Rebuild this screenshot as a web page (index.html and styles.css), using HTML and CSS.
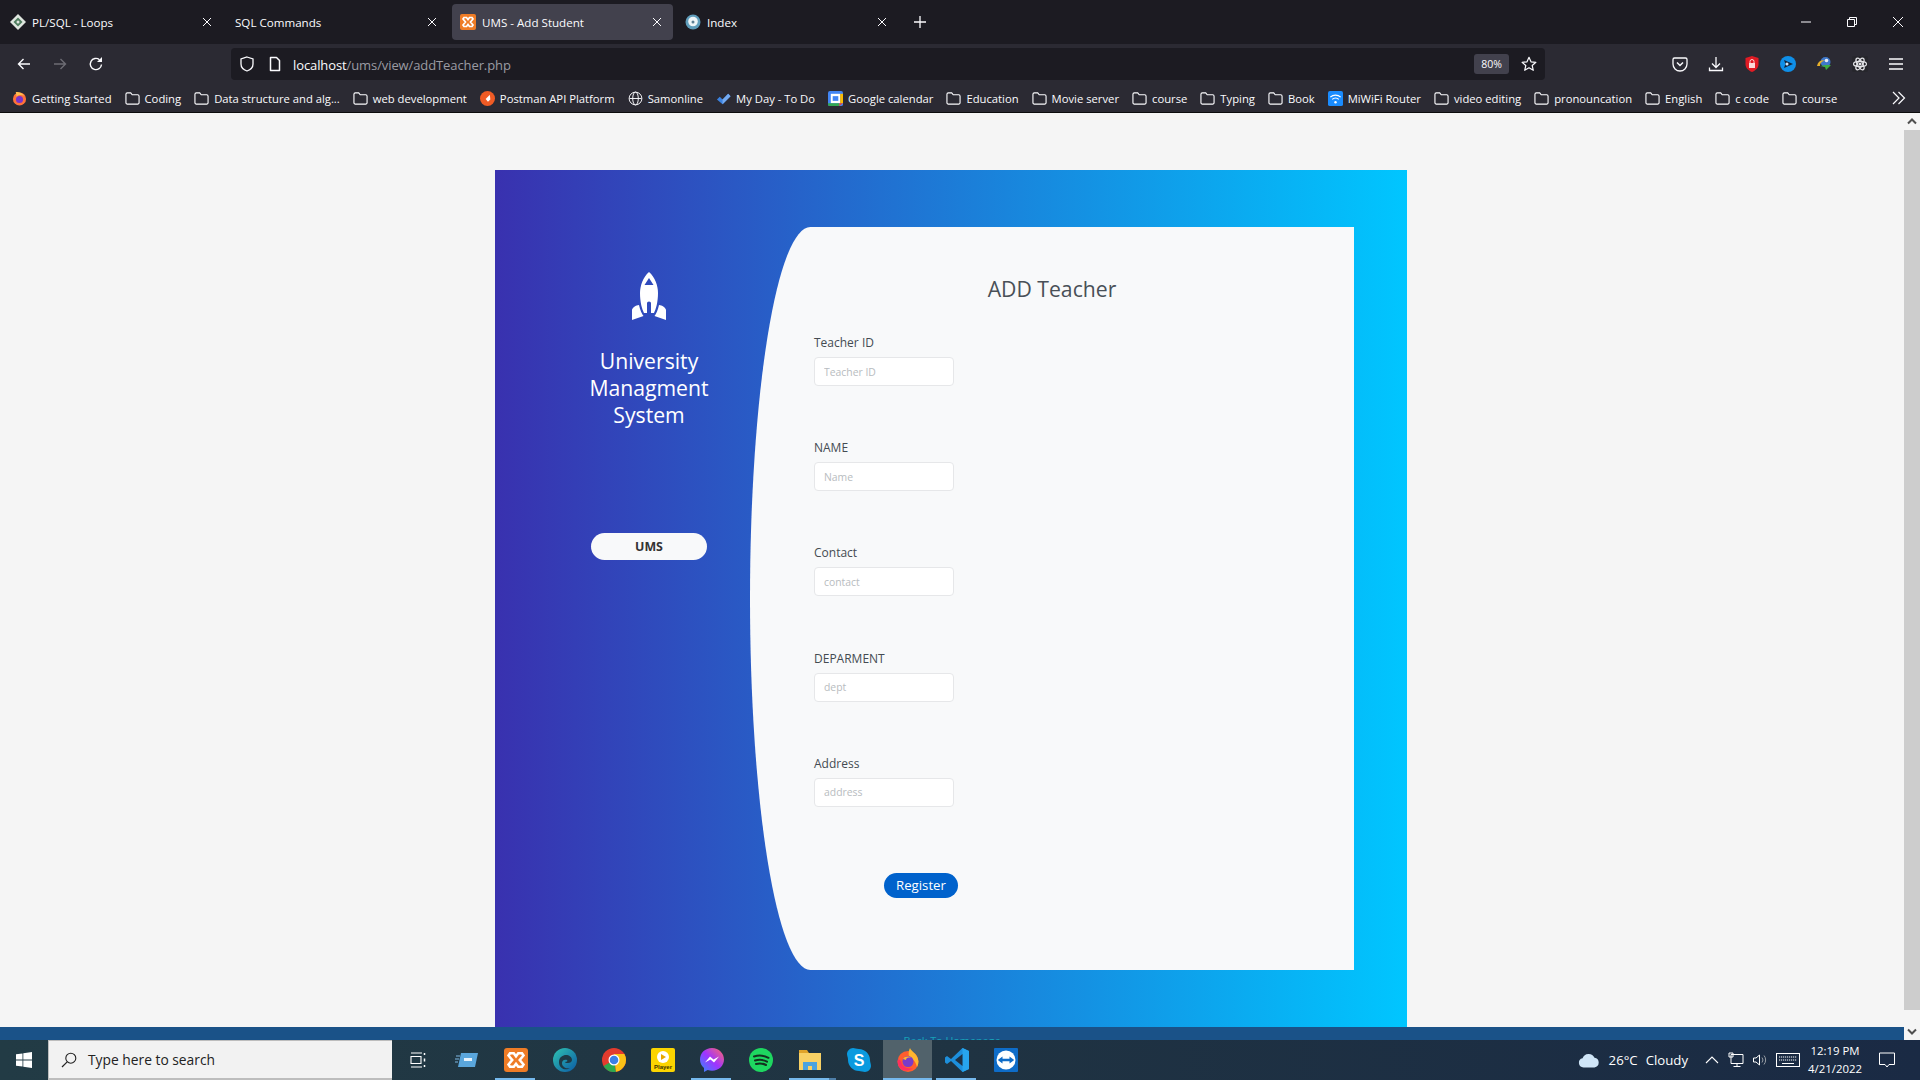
FILE: index.html
```html
<!DOCTYPE html>
<html lang="en">
<head>
    <meta charset="UTF-8">
    <title>UMS - Add Student</title>
    <link rel="stylesheet" href="styles.css">
</head>
<body>
    <svg class="defs" width="0" height="0">
        <symbol id="folder" viewBox="0 0 16 16">
            <path d="M2.5 2h3.6l1.6 2h5.8a1.5 1.5 0 0 1 1.5 1.5v7a1.5 1.5 0 0 1-1.5 1.5h-11A1.5 1.5 0 0 1 1 12.500v-9A1.500 1.500 0 0 1 2.500 2z" fill="none" stroke="#fbfbfe" stroke-width="1.200"/>
        </symbol>
        <symbol id="xampp" viewBox="0 0 16 16">
            <rect width="16" height="16" rx="2" fill="#ef7c26"/>
            <path d="M4 3.500h2.500L8 5.500l1.500-2H12l1 1.500-2.500 3 2.500 3-1 1.500H9.500L8 10.500l-1.500 2H4l-1-1.500 2.500-3-2.500-3z" fill="none" stroke="#fff" stroke-width="1.700"/>
        </symbol>
        <symbol id="close" viewBox="0 0 10 10">
            <path d="M1 1l8 8M9 1l-8 8" stroke="#fbfbfe" stroke-width="1" fill="none"/>
        </symbol>
    </svg>

    <div class="tabbar">
        <div class="tab">
            <svg class="favicon" viewBox="0 0 16 16"><path d="M8 0l8 8-8 8-8-8z" fill="#dfe6df"/><path d="M8 3.500L12.500 8 8 12.500 3.500 8z" fill="#4f7d5f"/><circle cx="8" cy="8" r="1.500" fill="#dfe6df"/></svg>
            <span class="tab-title">PL/SQL - Loops</span>
            <svg class="tab-close"><use href="#close"/></svg>
        </div>
        <div class="tab">
            <span class="tab-title">SQL Commands</span>
            <svg class="tab-close"><use href="#close"/></svg>
        </div>
        <div class="tab tab-active">
            <svg class="favicon"><use href="#xampp"/></svg>
            <span class="tab-title">UMS - Add Student</span>
            <svg class="tab-close"><use href="#close"/></svg>
        </div>
        <div class="tab">
            <svg class="favicon" viewBox="0 0 16 16"><circle cx="8" cy="8" r="7.500" fill="#5f9dbb"/><circle cx="8" cy="7.500" r="4.800" fill="#eef5f8"/><circle cx="8" cy="8" r="1.500" fill="#5b7f94"/></svg>
            <span class="tab-title">Index</span>
            <svg class="tab-close"><use href="#close"/></svg>
        </div>
        <svg class="new-tab" viewBox="0 0 14 14"><path d="M7 1v12M1 7h12" stroke="#fbfbfe" stroke-width="1.300"/></svg>
        <div class="window-controls">
            <svg viewBox="0 0 12 12"><path d="M1 6h10" stroke="#fbfbfe"/></svg>
            <svg viewBox="0 0 12 12"><path d="M1.500 3.500h7v7h-7zM3.500 3.500v-2h7v7h-2" fill="none" stroke="#fbfbfe"/></svg>
            <svg viewBox="0 0 12 12"><path d="M1 1l10 10M11 1L1 11" stroke="#fbfbfe" fill="none"/></svg>
        </div>
    </div>

    <div class="navbar">
        <svg class="nav-btn" viewBox="0 0 16 16"><path d="M14 8H2.500M7.500 3l-5 5 5 5" fill="none" stroke="#fbfbfe" stroke-width="1.400"/></svg>
        <svg class="nav-btn" viewBox="0 0 16 16"><path d="M2 8h11.500M8.500 3l5 5-5 5" fill="none" stroke="#6d6c74" stroke-width="1.400"/></svg>
        <svg class="nav-btn" viewBox="0 0 16 16"><path d="M13.500 8.500A5.600 5.600 0 1 1 11.500 3.700" fill="none" stroke="#fbfbfe" stroke-width="1.400"/><path d="M14 1v5H9z" fill="#fbfbfe"/></svg>
        <div class="urlbar">
            <svg class="url-icon" viewBox="0 0 16 16"><path d="M8 1l6 2v5c0 3.500-3 6-6 7-3-1-6-3.500-6-7V3z" fill="none" stroke="#fbfbfe" stroke-width="1.300"/></svg>
            <svg class="url-icon page-icon" viewBox="0 0 16 16"><path d="M3.500 1.500h6l3 3v10h-9z" fill="none" stroke="#fbfbfe" stroke-width="1.500" stroke-linejoin="round"/></svg>
            <span class="url-text"><b>localhost</b>/ums/view/addTeacher.php</span>
            <span class="zoom-level">80%</span>
            <svg class="star" viewBox="0 0 16 16"><path d="M8 1.300l2 4.500 4.900.5-3.700 3.200 1.100 4.800L8 11.800l-4.300 2.500 1.100-4.800L1.100 6.300 6 5.800z" fill="none" stroke="#fbfbfe" stroke-width="1.200" stroke-linejoin="round"/></svg>
        </div>
        <div class="toolbar">
            <svg viewBox="0 0 16 16"><path d="M2.500 2h11A1.500 1.500 0 0 1 15 3.500V8A7 7 0 0 1 1 8V3.500A1.500 1.500 0 0 1 2.500 2z" fill="none" stroke="#fbfbfe" stroke-width="1.300"/><path d="M5 6.500l3 3 3-3" fill="none" stroke="#fbfbfe" stroke-width="1.500"/></svg>
            <svg viewBox="0 0 16 16"><path d="M8 1v10M4 7.500L8 11.500l4-4M1.500 11.500v3h13v-3" fill="none" stroke="#fbfbfe" stroke-width="1.300"/></svg>
            <svg viewBox="0 0 16 16"><path d="M8 0l6.500 2v6c0 4-3 6.500-6.500 8-3.500-1.500-6.500-4-6.500-8V2z" fill="#e01b24"/><rect x="5" y="7" width="6" height="5" fill="#fbd9d9"/><path d="M6 7V5.500a2 2 0 0 1 4 0V7" fill="none" stroke="#fbd9d9"/></svg>
            <svg viewBox="0 0 16 16"><circle cx="8" cy="8" r="8" fill="#0f8fe8"/><path d="M4 4l9 4-9 4 1.500-4z" fill="#14233a"/><circle cx="7" cy="8" r="1.500" fill="#cfe8fb"/></svg>
            <svg viewBox="0 0 16 16"><circle cx="9.500" cy="6" r="5" fill="#3f78c9"/><path d="M1 10c1-5 5-7 8-5-3 0-5 2-5 5z" fill="#e8b02a"/><path d="M15 9l-5 5-1-3-5-1 6-1z" fill="#3fae3f"/><circle cx="10.500" cy="4.500" r="1.800" fill="#e9edf5"/></svg>
            <svg viewBox="0 0 16 16"><rect width="16" height="16" rx="2" fill="#26262c"/><g fill="none" stroke="#e4e4e8" stroke-width="1.200"><ellipse cx="8" cy="8" rx="6.500" ry="2.600"/><ellipse cx="8" cy="8" rx="6.500" ry="2.600" transform="rotate(60 8 8)"/><ellipse cx="8" cy="8" rx="6.500" ry="2.600" transform="rotate(120 8 8)"/></g><circle cx="8" cy="8" r="1.500" fill="#e4e4e8"/></svg>
            <svg viewBox="0 0 16 16"><path d="M1 3h14M1 8h14M1 13h14" stroke="#fbfbfe" stroke-width="1.500"/></svg>
        </div>
    </div>

    <div class="bookmarks">
        <span class="bm">
            <svg viewBox="0 0 16 16"><circle cx="8" cy="8.500" r="7" fill="#ff7139"/><circle cx="8" cy="9" r="3.800" fill="#7a33c9"/><path d="M4 1c3 0 6 0 9 4-3-1-6-1-8 1z" fill="#ffbd4f"/></svg>
            Getting Started
        </span>
        <span class="bm"><svg><use href="#folder"/></svg>Coding</span>
        <span class="bm"><svg><use href="#folder"/></svg>Data structure and alg...</span>
        <span class="bm"><svg><use href="#folder"/></svg>web development</span>
        <span class="bm">
            <svg viewBox="0 0 16 16"><circle cx="8" cy="8" r="8" fill="#ef5b25"/><path d="M10.500 4L6 8.500l2.500 3L11 9z" fill="#fff"/></svg>
            Postman API Platform
        </span>
        <span class="bm">
            <svg viewBox="0 0 16 16" fill="none" stroke="#fbfbfe"><circle cx="8" cy="8" r="6.800"/><ellipse cx="8" cy="8" rx="3" ry="6.800"/><path d="M1.500 8h13"/></svg>
            Samonline
        </span>
        <span class="bm">
            <svg viewBox="0 0 16 16"><path d="M1 9l3-3 3 3 6-6 2.500 2.500L7 14z" fill="#3b82e0"/><path d="M7 9l6-6 2.500 2.500L7 14z" fill="#74aaf0"/></svg>
            My Day - To Do
        </span>
        <span class="bm">
            <svg viewBox="0 0 16 16"><rect width="16" height="16" rx="2" fill="#4285f4"/><rect x="3" y="3" width="10" height="10" fill="#fff"/><path d="M0 13h12v3H2a2 2 0 0 1-2-2z" fill="#34a853"/><path d="M13 3h3v10h-3z" fill="#fbbc04"/><path d="M12 13h4l-4 3z" fill="#ea4335"/><rect x="5" y="5.500" width="6" height="5" fill="#4285f4"/></svg>
            Google calendar
        </span>
        <span class="bm"><svg><use href="#folder"/></svg>Education</span>
        <span class="bm"><svg><use href="#folder"/></svg>Movie server</span>
        <span class="bm"><svg><use href="#folder"/></svg>course</span>
        <span class="bm"><svg><use href="#folder"/></svg>Typing</span>
        <span class="bm"><svg><use href="#folder"/></svg>Book</span>
        <span class="bm">
            <svg viewBox="0 0 16 16"><rect width="16" height="16" rx="2" fill="#1a8cff"/><path d="M2.500 6.500a8 8 0 0 1 11 0M4.500 9a5 5 0 0 1 7 0" fill="none" stroke="#fff" stroke-width="1.300"/><circle cx="8" cy="12" r="1.300" fill="#fff"/></svg>
            MiWiFi Router
        </span>
        <span class="bm"><svg><use href="#folder"/></svg>video editing</span>
        <span class="bm"><svg><use href="#folder"/></svg>pronouncation</span>
        <span class="bm"><svg><use href="#folder"/></svg>English</span>
        <span class="bm"><svg><use href="#folder"/></svg>c code</span>
        <span class="bm"><svg><use href="#folder"/></svg>course</span>
        <svg class="bm-more" viewBox="0 0 14 14"><path d="M1 1l6 6-6 6M6.500 1l6 6-6 6" fill="none" stroke="#fbfbfe" stroke-width="1.200"/></svg>
    </div>

    <div class="viewport">
        <div class="page">
            <div class="register">
                <div class="register-left">
                    <svg class="rocket" viewBox="0 0 34 48">
                        <path fill-rule="evenodd" fill="#fff" d="M17 0C11 5 8 14 8 21c0 9 2 16 4 20h3V31q0-1.500 2-1.500t2 1.500v10h3c2-4 4-11 4-20 0-7-3-16-9-21zM17 6l-4.500 7h9z"/>
                        <path fill="#fff" d="M0 48V38c0-2 4-5 7-5 1 5 3 9 4.500 11zM34 48V38c0-2-4-5-7-5-1 5-3 9-4.500 11z"/>
                    </svg>
                    <h3 class="brand">University Managment System</h3>
                    <div class="ums-badge">UMS</div>
                </div>
                <div class="register-right">
                    <h3 class="form-title">ADD Teacher</h3>
                    <div class="form-group">
                        <label>Teacher ID</label>
                        <input type="text" placeholder="Teacher ID">
                    </div>
                    <div class="form-group">
                        <label>NAME</label>
                        <input type="text" placeholder="Name">
                    </div>
                    <div class="form-group">
                        <label>Contact</label>
                        <input type="text" placeholder="contact">
                    </div>
                    <div class="form-group">
                        <label>DEPARMENT</label>
                        <input type="text" placeholder="dept">
                    </div>
                    <div class="form-group">
                        <label>Address</label>
                        <input type="text" placeholder="address">
                    </div>
                    <button class="btn-register">Register</button>
                </div>
            </div>
            <div class="page-footer">Back To Homepage</div>
        </div>
        <div class="scrollbar">
            <svg viewBox="0 0 16 16"><path d="M4 10l4-4 4 4" fill="none" stroke="#505050" stroke-width="2"/></svg>
            <div class="scroll-track"><div class="scroll-thumb"></div></div>
            <svg viewBox="0 0 16 16"><path d="M4 6l4 4 4-4" fill="none" stroke="#505050" stroke-width="2"/></svg>
        </div>
    </div>

    <div class="taskbar">
        <div class="start">
            <svg viewBox="0 0 16 16"><path d="M0 2.300l6.500-.9v6.200H0zM7.300 1.300L16 0v7.600H7.300zM0 8.400h6.500v6.200L0 13.700zM7.300 8.400H16V16l-8.700-1.300z" fill="#fff"/></svg>
        </div>
        <div class="search">
            <svg viewBox="0 0 16 16"><circle cx="9.800" cy="6.200" r="5" fill="none" stroke="#222" stroke-width="1.100"/><path d="M6.200 9.800L1 15" stroke="#222" stroke-width="1.200"/></svg>
            Type here to search
        </div>
        <div class="task-icons">
            <div class="task-item">
                <svg class="small" viewBox="0 0 16 16"><path d="M1 1h11M1 15h11M1 4.500h10v7H1z" fill="none" stroke="#fff" stroke-width="1.100"/><path d="M14.500 1v2M14.500 6.500v3M14.500 13v2" stroke="#fff" stroke-width="1.500"/></svg>
            </div>
            <div class="task-item">
                <svg viewBox="0 0 24 24"><path d="M6 5h17l-3 14H3z" fill="#5aa6dc"/><path d="M9 10h8v3H9z" fill="#e6f2fb"/><path d="M1 8h4M0 11h4M0 14h3" stroke="#7fb8e2"/></svg>
            </div>
            <div class="task-item task-open">
                <svg viewBox="0 0 16 16"><use href="#xampp"/></svg>
            </div>
            <div class="task-item">
                <svg viewBox="0 0 24 24"><defs><linearGradient id="edge" x1="0" y1="0" x2="1" y2="1"><stop offset="0" stop-color="#2fc4b2"/><stop offset="1" stop-color="#0c59a4"/></linearGradient></defs><circle cx="12" cy="12" r="12" fill="url(#edge)"/><path d="M6 14c0-5 4-7 7-7s6 2 6 5c0 2-2 3-4 3-1 0-3 0-3-1 2 0 3-1 2-2-2-1-5 0-5 3 0 4 4 6 8 5-4 3-11 1-11-6z" fill="#1e3a46"/></svg>
            </div>
            <div class="task-item">
                <svg viewBox="0 0 24 24"><circle cx="12" cy="12" r="12" fill="#e33b2e"/><path d="M12 12L1.600 18A12 12 0 0 0 14 23.800z" fill="#2da94f"/><path d="M12 6h10.400a12 12 0 0 1-8.400 17.800z" fill="#fbc116"/><circle cx="12" cy="12" r="5.500" fill="#fff"/><circle cx="12" cy="12" r="4.300" fill="#3d7fe6"/></svg>
            </div>
            <div class="task-item">
                <svg viewBox="0 0 24 24"><rect width="24" height="24" rx="2" fill="#fbd400"/><circle cx="12" cy="9" r="6" fill="#fff"/><path d="M10 6l5 3-5 3z" fill="#e8a800"/><text x="12" y="21" font-size="6" font-weight="700" text-anchor="middle" fill="#3b3300" font-family="Liberation Sans">Player</text></svg>
            </div>
            <div class="task-item task-open">
                <svg viewBox="0 0 24 24"><defs><linearGradient id="msgr" x1="0" y1="1" x2="1" y2="0"><stop offset="0" stop-color="#2f8cff"/><stop offset=".5" stop-color="#a033ff"/><stop offset="1" stop-color="#ff6a68"/></linearGradient></defs><path d="M12 0C5 0 0 5 0 11.500c0 3.500 1.500 6.500 4 8.500v4l3.700-2c1.300.5 2.800.7 4.300.7 7 0 12-5 12-11.200S19 0 12 0z" fill="url(#msgr)"/><path d="M5 14.500l5-6 3.500 3 5.500-3-5 6-3.500-3z" fill="#fff"/></svg>
            </div>
            <div class="task-item">
                <svg viewBox="0 0 24 24"><circle cx="12" cy="12" r="12" fill="#1ed760"/><path d="M5 8.500c5-1.500 10-1 14.500 1.300M6 12.500c4-1.200 8.500-.8 12 1.200M7 16c3.500-1 7-.6 10 1" fill="none" stroke="#14301f" stroke-width="2" stroke-linecap="round"/></svg>
            </div>
            <div class="task-item task-open task-split">
                <svg viewBox="0 0 24 24"><path d="M1 2h8l2 3h-10z" fill="#e0a42a"/><path d="M1 5h22v17H1z" fill="#f8d165"/><path d="M5 14h14v8H5z" fill="#4aa3df"/><path d="M10 18h4v4h-4z" fill="#f8d165"/></svg>
            </div>
            <div class="task-item">
                <svg viewBox="0 0 24 24"><path d="M6 0c2 0 3 1 6 1 6 0 11 5 11 11 0 2 1 4 1 6 0 3-3 6-6 6-2 0-4-1-6-1C6 23 1 18 1 12c0-3-1-4-1-6 0-3 3-6 6-6z" fill="#0a9adf"/><text x="12" y="18" font-size="16" font-weight="700" text-anchor="middle" fill="#fff" font-family="Liberation Sans">S</text></svg>
            </div>
            <div class="task-item task-open task-active">
                <svg viewBox="0 0 24 24"><circle cx="12" cy="13.500" r="10.500" fill="#ff5d2e"/><path d="M14 0c1 3 7 6 8 11 1 3 0 6-1 8-2-8-5-7-8-11-1-2 0-6 1-8z" fill="#ffb52e"/><path d="M2 11c-1 4 0 8 4 11 3 1 8 1 11-2-6 2-11-2-12-7z" fill="#ff2f5e"/><circle cx="12" cy="13.500" r="5.500" fill="#7a3bc9"/><path d="M7 11c2-3 6-3 8-1-3-1-5 0-5 2z" fill="#ffb52e"/></svg>
            </div>
            <div class="task-item task-open">
                <svg viewBox="0 0 24 24"><path d="M17.500 0L24 3v18l-6.500 3L6 13l-4 3-2-1.500v-5L2 8l4 3z" fill="#1d8fdc"/><path d="M17.500 0v24L24 21V3z" fill="#27a5ee"/><path d="M17.500 6L10 12l7.500 6z" fill="#1e3144"/></svg>
            </div>
            <div class="task-item">
                <svg viewBox="0 0 24 24"><rect width="24" height="24" rx="1" fill="#0e6cc8"/><circle cx="12" cy="12" r="9.500" fill="#fff"/><path d="M3.800 12l4.700-3.500v2.200h7V8.500l4.700 3.500-4.700 3.500v-2.200h-7v2.200z" fill="#0e6cc8"/></svg>
            </div>
        </div>
        <div class="tray">
            <svg class="cloud" viewBox="0 0 24 16"><path d="M6 15.500a5 5 0 0 1-1-9.900A7 7 0 0 1 18 5a5.300 5.300 0 0 1 0 10.500z" fill="#cfe5f7"/></svg>
            <span class="weather">26°C</span>
            <span class="weather">Cloudy</span>
            <svg class="tray-icon" viewBox="0 0 16 16"><path d="M2 11l6-6 6 6" fill="none" stroke="#fff" stroke-width="1.100"/></svg>
            <svg class="tray-icon" viewBox="0 0 16 16"><path d="M3 2.500h12v9H3zM1 1h4v4H1zM9 11.500v3M5.500 14.500h7" fill="none" stroke="#fff"/></svg>
            <svg class="tray-icon" viewBox="0 0 16 16"><path d="M1.500 6h2.500L7.500 3v10L4 10H1.500z" fill="none" stroke="#fff"/><path d="M10 5.500a4 4 0 0 1 0 5M12 3.500a7 7 0 0 1 0 9" fill="none" stroke="#999fa6"/></svg>
            <svg class="keyboard" viewBox="0 0 24 14"><rect x=".5" y=".5" width="23" height="13" fill="none" stroke="#fff"/><path d="M3 4h18M3 7h18" stroke="#fff" stroke-dasharray="1.200 .8"/><path d="M6 10.500h12" stroke="#fff"/></svg>
            <div class="clock"><span>12:19 PM</span><span>4/21/2022</span></div>
            <svg class="notify" viewBox="0 0 16 16"><path d="M.5 1h15v11.500H10L8 15l-2-2.500H.5z" fill="none" stroke="#fff"/></svg>
        </div>
    </div>
</body>
</html>
```

FILE: styles.css
```css
* {
    box-sizing: border-box;
}
html, body {
    height: 100%;
}
body {
    margin: 0;
    display: flex;
    flex-direction: column;
    overflow: hidden;
    background: #f5f5f5;
    font-family: "Open Sans", "Noto Sans", sans-serif;
}
.defs {
    position: absolute;
}

/* browser chrome */
.tabbar {
    height: 44px;
    flex: none;
    background: #1c1b22;
    display: flex;
    align-items: flex-start;
    padding: 4px 0 0 2px;
    color: #fbfbfe;
}
.tab {
    width: 221px;
    height: 36px;
    margin-right: 4px;
    padding: 0 8px;
    border-radius: 4px;
    display: flex;
    align-items: center;
    font-size: 11.6px;
}
.tab-active {
    background: #42414d;
}
.favicon {
    width: 16px;
    height: 16px;
    margin-right: 6px;
    flex: none;
}
.tab-title {
    flex: 1;
    white-space: nowrap;
}
.tab-close {
    width: 10px;
    height: 10px;
    margin-right: 3px;
    flex: none;
}
.new-tab {
    width: 14px;
    height: 14px;
    margin: 11px 0 0 11px;
}
.window-controls {
    margin-left: auto;
    display: flex;
    gap: 34px;
    padding: 12px 16px 0 0;
}
.window-controls svg {
    width: 12px;
    height: 12px;
}

.navbar {
    height: 36px;
    flex: none;
    background: #2b2a33;
    display: flex;
    align-items: flex-start;
    padding: 4px 0 0 16px;
}
.nav-btn {
    width: 16px;
    height: 16px;
    margin: 8px 20px 0 0;
}
.urlbar {
    width: 1314px;
    height: 32px;
    margin-left: 107px;
    background: #1c1b22;
    border-radius: 4px;
    display: flex;
    align-items: center;
    padding: 0 8px;
    color: #fbfbfe;
}
.url-icon {
    width: 16px;
    height: 16px;
    margin-right: 12px;
    flex: none;
}
.page-icon {
    margin-right: 10px;
}
.url-text {
    flex: 1;
    padding-top: 1px;
    font-size: 13px;
    color: #9b9ba3;
    letter-spacing: -.1px;
}
.url-text b {
    font-weight: 400;
    color: #fbfbfe;
}
.zoom-level {
    width: 35px;
    height: 20px;
    background: #42414d;
    border-radius: 3px;
    font-size: 10.5px;
    line-height: 20px;
    text-align: center;
    margin-right: 12px;
}
.star {
    width: 16px;
    height: 16px;
}
.toolbar {
    display: flex;
    gap: 20px;
    margin-left: 127px;
    padding-top: 8px;
}
.toolbar svg {
    width: 16px;
    height: 16px;
}

.bookmarks {
    height: 33px;
    flex: none;
    background: #2b2a33;
    border-bottom: 1px solid #0c0c0d;
    display: flex;
    align-items: center;
    padding: 4px 10px 0 12px;
    color: #fbfbfe;
    font-size: 11.25px;
    white-space: nowrap;
}
.bm {
    display: flex;
    align-items: center;
    gap: 5px;
    margin-right: 13px;
}
.bm svg {
    width: 15px;
    height: 15px;
    flex: none;
}
.bm-more {
    width: 14px;
    height: 14px;
    margin-left: auto;
    margin-right: 4px;
}

/* page viewport */
.viewport {
    flex: 1;
    min-height: 0;
    display: flex;
}
.page {
    flex: 1;
    min-width: 0;
    overflow: hidden;
    display: flex;
    flex-direction: column;
    align-items: center;
    padding-top: 57px;
}
.register {
    width: 912px;
    height: 857px;
    flex: none;
    margin-right: 2px;
    background: linear-gradient(to right, #3931af, #00c6ff);
    padding: 57px 53px;
    display: flex;
}
.register-left {
    width: 202px;
    flex: none;
    display: flex;
    flex-direction: column;
    align-items: center;
    padding-top: 45px;
    color: #fff;
}
.rocket {
    width: 34px;
    height: 48px;
    flex: none;
}
.brand {
    margin: 27px 0 0;
    width: 150px;
    font-size: 21.2px;
    font-weight: 400;
    line-height: 27px;
    text-align: center;
}
.ums-badge {
    width: 116px;
    height: 27px;
    margin-top: 105px;
    border-radius: 14px;
    background: #f8f9fa;
    color: #333;
    font-size: 12.4px;
    font-weight: 700;
    line-height: 27px;
    text-align: center;
}
.register-right {
    width: 604px;
    background: #f8f9fa;
    border-top-left-radius: 10% 50%;
    border-bottom-left-radius: 10% 50%;
    padding: 45px 64px 0;
    color: #343a40;
}
.form-title {
    margin: 0 0 28px;
    font-size: 21.2px;
    font-weight: 400;
    line-height: 34px;
    text-align: center;
    color: #495057;
}
.form-group {
    margin-bottom: 53.2px;
}
.form-group label {
    display: block;
    font-size: 12px;
    line-height: 18px;
    margin-bottom: 5px;
    color: #444b52;
}
.form-group input {
    display: block;
    width: 140px;
    height: 29px;
    padding: 0 9px;
    border: 1px solid #e6e7e9;
    border-radius: 4px;
    background: #fff;
    font-family: inherit;
    font-size: 10.4px;
}
.form-group input::placeholder {
    color: #b8bcc0;
}
.btn-register {
    display: block;
    width: 74px;
    height: 25px;
    margin: 66px 0 0 70px;
    border: 0;
    border-radius: 13px;
    background: #0062cc;
    color: #fff;
    font-family: inherit;
    font-size: 13.2px;
}
.page-footer {
    width: 100%;
    height: 40px;
    flex: none;
    background: #1a5288;
    color: #17a2b8;
    font-size: 10.8px;
    line-height: 16px;
    padding-top: 6px;
    text-align: center;
}

.scrollbar {
    width: 16px;
    flex: none;
    background: #f5f5f5;
    display: flex;
    flex-direction: column;
}
.scrollbar svg {
    width: 16px;
    height: 17px;
    flex: none;
}
.scroll-track {
    flex: 1;
    padding-bottom: 13px;
    display: flex;
}
.scroll-thumb {
    flex: 1;
    background: #cdcdcd;
}

/* windows taskbar */
.taskbar {
    height: 40px;
    flex: none;
    background: linear-gradient(to right, #223b45, #1f3342 50%, #1a2a44);
    display: flex;
    color: #fff;
}
.start {
    width: 48px;
    display: flex;
    align-items: center;
    justify-content: center;
}
.start svg {
    width: 16px;
    height: 16px;
}
.search {
    width: 344px;
    background: #f2f2f2;
    border: 1px solid #bdbdbd;
    border-width: 1px 0 2px 1px;
    color: #222;
    font-size: 13.8px;
    display: flex;
    align-items: center;
    gap: 11px;
    padding-left: 12px;
}
.search svg {
    width: 16px;
    height: 16px;
}
.task-icons {
    display: flex;
    margin-left: 1px;
}
.task-item {
    width: 49px;
    position: relative;
    display: flex;
    align-items: center;
    justify-content: center;
    padding-bottom: 1px;
}
.task-item svg {
    width: 24px;
    height: 24px;
}
.task-item svg.small {
    width: 16px;
    height: 16px;
}
.task-open::after {
    content: "";
    position: absolute;
    left: 4px;
    right: 5px;
    bottom: 0;
    height: 2px;
    background: #76b9ed;
}
.task-split::before {
    content: "";
    position: absolute;
    left: 44px;
    width: 7px;
    bottom: 0;
    height: 2px;
    background: #4f7fa8;
}
.task-active {
    background: #51626b;
}
.task-active::after {
    left: 0;
    right: 0;
}
.tray {
    margin-left: auto;
    display: flex;
    align-items: center;
    font-size: 13.2px;
}
.cloud {
    width: 22px;
    height: 15px;
    margin-right: 9px;
}
.weather {
    margin-right: 8px;
}
.tray-icon {
    width: 16px;
    height: 16px;
    margin-left: 8px;
}
.keyboard {
    width: 24px;
    height: 14px;
    margin-left: 8px;
}
.clock {
    width: 70px;
    display: flex;
    flex-direction: column;
    align-items: center;
    font-size: 11.4px;
    line-height: 18px;
}
.notify {
    width: 16px;
    height: 16px;
    margin: 0 25px 0 9px;
}
```
